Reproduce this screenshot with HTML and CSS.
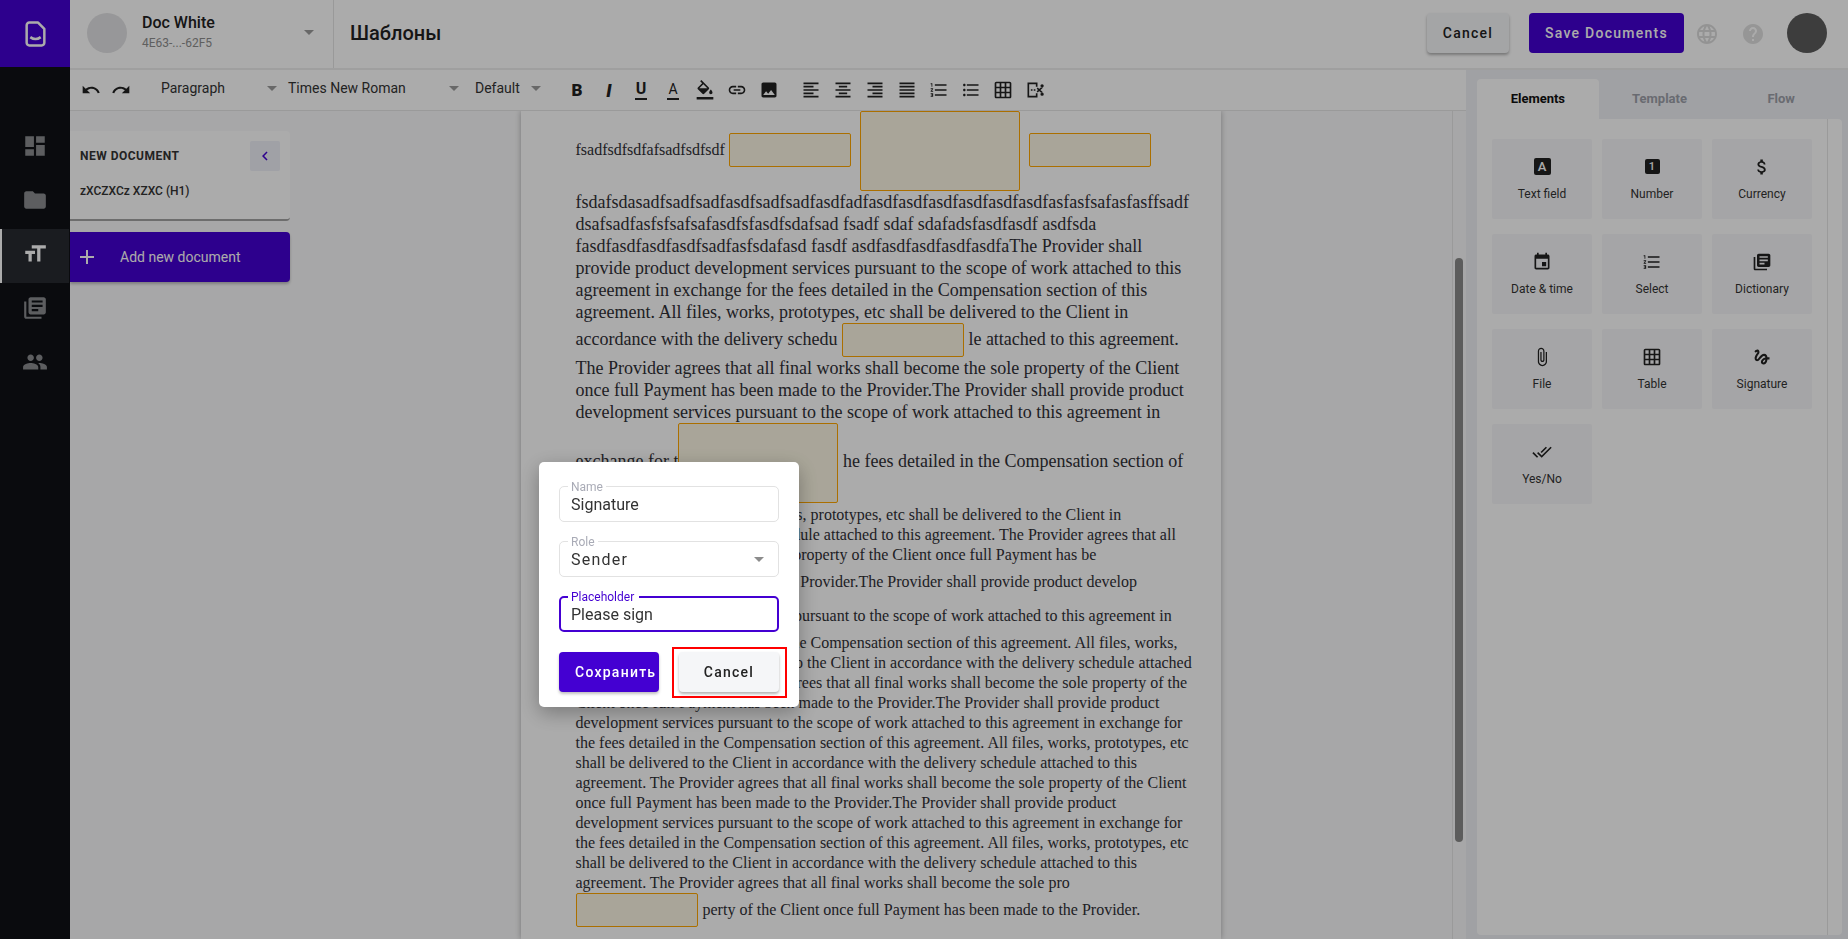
FILE: index.html
```html
<!DOCTYPE html>
<html lang="en">
<head>
    <meta charset="UTF-8">
    <title>Templates</title>
    <link rel="stylesheet" href="styles.css">
</head>
<body>
<svg class="sprite" xmlns="http://www.w3.org/2000/svg">
    <symbol id="i-dashboard" viewBox="0 0 24 24"><path d="M3 13h8V3H3v10zm0 8h8v-6H3v6zm10 0h8V11h-8v10zm0-18v6h8V3h-8z"/></symbol>
    <symbol id="i-folder" viewBox="0 0 24 24"><path d="M10 4H4c-1.1 0-1.99.9-1.99 2L2 18c0 1.1.9 2 2 2h16c1.1 0 2-.9 2-2V8c0-1.1-.9-2-2-2h-8l-2-2z"/></symbol>
    <symbol id="i-size" viewBox="0 0 24 24"><path d="M9 4v3h5v12h3V7h5V4H9zm-6 8h3v7h3v-7h3V9H3v3z"/></symbol>
    <symbol id="i-library" viewBox="0 0 24 24"><path d="M4 6H2v14c0 1.1.9 2 2 2h14v-2H4V6zm16-4H8c-1.1 0-2 .9-2 2v12c0 1.1.9 2 2 2h12c1.1 0 2-.9 2-2V4c0-1.1-.9-2-2-2zm-1 9H9V9h10v2zm-4 4H9v-2h6v2zm4-8H9V5h10v2z"/></symbol>
    <symbol id="i-people" viewBox="0 0 24 24"><path d="M16 11c1.66 0 2.99-1.34 2.99-3S17.66 5 16 5c-1.66 0-3 1.34-3 3s1.34 3 3 3zm-8 0c1.66 0 2.99-1.34 2.99-3S9.66 5 8 5C6.34 5 5 6.34 5 8s1.34 3 3 3zm0 2c-2.33 0-7 1.17-7 3.5V19h14v-2.5c0-2.33-4.67-3.5-7-3.5zm8 0c-.29 0-.62.02-.97.05 1.16.84 1.97 1.97 1.97 3.45V19h6v-2.5c0-2.33-4.67-3.5-7-3.5z"/></symbol>
    <symbol id="i-undo" viewBox="0 0 24 24"><path d="M12.5 8c-2.65 0-5.05.99-6.9 2.6L2 7v9h9l-3.62-3.62c1.39-1.16 3.16-1.88 5.12-1.88 3.54 0 6.55 2.31 7.6 5.5l2.37-.78C21.08 11.03 17.15 8 12.5 8z"/></symbol>
    <symbol id="i-redo" viewBox="0 0 24 24"><path d="M18.4 10.6C16.55 8.99 14.15 8 11.5 8c-4.65 0-8.58 3.03-9.96 7.22L3.9 16c1.05-3.19 4.05-5.5 7.6-5.5 1.95 0 3.73.72 5.12 1.88L13 16h9V7l-3.6 3.6z"/></symbol>
    <symbol id="i-fill" viewBox="0 0 24 24"><path d="M16.56 8.94L7.62 0 6.21 1.41l2.38 2.38-5.15 5.15c-.59.59-.59 1.54 0 2.12l5.5 5.5c.29.29.68.44 1.06.44s.77-.15 1.06-.44l5.5-5.5c.59-.58.59-1.53 0-2.12zM5.21 10L10 5.21 14.79 10H5.21zM19 11.5s-2 2.17-2 3.5c0 1.1.9 2 2 2s2-.9 2-2c0-1.33-2-3.5-2-3.5zM2 20.500h20v3H2z"/></symbol>
    <symbol id="i-link" viewBox="0 0 24 24"><path d="M3.9 12c0-1.71 1.39-3.1 3.1-3.1h4V7H7c-2.76 0-5 2.24-5 5s2.24 5 5 5h4v-1.9H7c-1.71 0-3.1-1.39-3.1-3.1zM8 13h8v-2H8v2zm9-6h-4v1.9h4c1.71 0 3.1 1.39 3.1 3.1s-1.39 3.1-3.1 3.1h-4V17h4c2.76 0 5-2.24 5-5s-2.24-5-5-5z"/></symbol>
    <symbol id="i-image" viewBox="0 0 24 24"><path d="M21 19V5c0-1.1-.9-2-2-2H5c-1.1 0-2 .9-2 2v14c0 1.1.9 2 2 2h14c1.1 0 2-.9 2-2zM8.5 13.5l2.5 3.01L14.5 12l4.5 6H5l3.5-4.5z"/></symbol>
    <symbol id="i-left" viewBox="0 0 24 24"><path d="M15 15H3v2h12v-2zm0-8H3v2h12V7zM3 13h18v-2H3v2zm0 8h18v-2H3v2zM3 3v2h18V3H3z"/></symbol>
    <symbol id="i-center" viewBox="0 0 24 24"><path d="M7 15v2h10v-2H7zm-4 6h18v-2H3v2zm0-8h18v-2H3v2zm4-6v2h10V7H7zM3 3v2h18V3H3z"/></symbol>
    <symbol id="i-right" viewBox="0 0 24 24"><path d="M3 21h18v-2H3v2zm6-4h12v-2H9v2zm-6-4h18v-2H3v2zm6-4h12V7H9v2zM3 3v2h18V3H3z"/></symbol>
    <symbol id="i-justify" viewBox="0 0 24 24"><path d="M3 21h18v-2H3v2zm0-4h18v-2H3v2zm0-4h18v-2H3v2zm0-4h18V7H3v2zm0-6v2h18V3H3z"/></symbol>
    <symbol id="i-ol" viewBox="0 0 24 24"><path d="M2 17h2v.5H3v1h1v.5H2v1h3v-4H2v1zm1-9h1V4H2v1h1v3zm-1 3h1.8L2 13.1v.9h3v-1H3.2L5 10.9V10H2v1zm5-6v2h14V5H7zm0 14h14v-2H7v2zm0-6h14v-2H7v2z"/></symbol>
    <symbol id="i-ul" viewBox="0 0 24 24"><path d="M4 10.5c-.83 0-1.5.67-1.5 1.5s.67 1.5 1.5 1.5 1.5-.67 1.5-1.5-.67-1.5-1.5-1.5zm0-6c-.83 0-1.5.67-1.5 1.5S3.17 7.5 4 7.5 5.5 6.83 5.5 6 4.83 4.5 4 4.5zm0 12c-.83 0-1.5.68-1.5 1.5s.68 1.5 1.5 1.5 1.5-.68 1.5-1.5-.67-1.5-1.5-1.5zM7 19h14v-2H7v2zm0-6h14v-2H7v2zm0-8v2h14V5H7z"/></symbol>
    <symbol id="i-table" viewBox="0 0 24 24"><path d="M20 2H4c-1.1 0-2 .9-2 2v16c0 1.1.9 2 2 2h16c1.1 0 2-.9 2-2V4c0-1.1-.9-2-2-2zM8 20H4v-4h4v4zm0-6H4v-4h4v4zm0-6H4V4h4v4zm6 12h-4v-4h4v4zm0-6h-4v-4h4v4zm0-6h-4V4h4v4zm6 12h-4v-4h4v4zm0-6h-4v-4h4v4zm0-6h-4V4h4v4z"/></symbol>
    <symbol id="i-export" viewBox="0 0 24 24"><path d="M3 3h12v5h-2V5H5v14h8v-3h2v5H3zM7 11h2v2H7zM10.500 11h2v2h-2zM14 10.500l1.200-1.500 6 5.500-1.200 1.500zM14 13.500l6-5.500 1.200 1.500-6 5.500zM18.500 7a2 2 0 1 0 4 0 2 2 0 1 0-4 0zM18.500 17a2 2 0 1 0 4 0 2 2 0 1 0-4 0z"/></symbol>
    <symbol id="i-globe" viewBox="0 0 24 24"><path d="M11.990 2C6.470 2 2 6.480 2 12s4.470 10 9.990 10C17.520 22 22 17.520 22 12S17.520 2 11.990 2zm6.930 6h-2.950c-.32-1.250-.78-2.450-1.380-3.560 1.840.63 3.370 1.910 4.330 3.560zM12 4.040c.83 1.200 1.480 2.530 1.910 3.960h-3.820c.43-1.430 1.080-2.760 1.910-3.960zM4.260 14C4.100 13.360 4 12.690 4 12s.1-1.360.26-2h3.380c-.08.66-.14 1.320-.14 2 0 .68.06 1.340.14 2H4.260zm.82 2h2.950c.32 1.250.78 2.450 1.380 3.560-1.840-.63-3.370-1.900-4.330-3.560zm2.950-8H5.080c.96-1.660 2.490-2.930 4.330-3.560C8.810 5.550 8.350 6.750 8.030 8zM12 19.960c-.83-1.200-1.480-2.530-1.910-3.960h3.820c-.43 1.430-1.080 2.760-1.910 3.960zM14.340 14H9.660c-.09-.66-.16-1.320-.16-2 0-.68.07-1.350.16-2h4.680c.09.65.16 1.320.16 2 0 .68-.07 1.340-.16 2zm.25 5.560c.6-1.110 1.060-2.310 1.380-3.560h2.950c-.96 1.650-2.490 2.930-4.330 3.560zM16.360 14c.08-.66.14-1.320.14-2 0-.68-.06-1.340-.14-2h3.380c.16.64.26 1.310.26 2s-.1 1.360-.26 2h-3.380z"/></symbol>
    <symbol id="i-help" viewBox="0 0 24 24"><path d="M12 2C6.480 2 2 6.480 2 12s4.480 10 10 10 10-4.480 10-10S17.520 2 12 2zm1 17h-2v-2h2v2zm2.070-7.750l-.9.92C13.450 12.900 13 13.500 13 15h-2v-.5c0-1.100.45-2.100 1.170-2.830l1.240-1.260c.37-.36.59-.86.59-1.410 0-1.100-.9-2-2-2s-2 .9-2 2H8c0-2.210 1.790-4 4-4s4 1.790 4 4c0 .88-.36 1.680-.93 2.250z"/></symbol>
    <symbol id="i-chevron" viewBox="0 0 24 24"><path d="M15.410 7.410L14 6l-6 6 6 6 1.410-1.410L10.830 12z"/></symbol>
    <symbol id="i-add" viewBox="0 0 24 24"><path d="M19 13h-6v6h-2v-6H5v-2h6V5h2v6h6v2z"/></symbol>
    <symbol id="i-money" viewBox="0 0 24 24"><path d="M11.800 10.900c-2.270-.59-3-1.200-3-2.150 0-1.090 1.010-1.850 2.700-1.850 1.780 0 2.440.85 2.500 2.100h2.210c-.07-1.720-1.120-3.300-3.210-3.810V3h-3v2.160c-1.940.42-3.500 1.680-3.500 3.610 0 2.310 1.910 3.460 4.700 4.130 2.500.6 3 1.480 3 2.410 0 .69-.49 1.790-2.700 1.790-2.060 0-2.870-.92-2.980-2.100h-2.200c.12 2.190 1.760 3.420 3.680 3.830V21h3v-2.150c1.950-.37 3.500-1.500 3.500-3.550 0-2.840-2.430-3.810-4.700-4.400z"/></symbol>
    <symbol id="i-event" viewBox="0 0 24 24"><path d="M17 12h-5v5h5v-5zM16 1v2H8V1H6v2H5c-1.110 0-1.990.9-1.990 2L3 19c0 1.100.89 2 2 2h14c1.100 0 2-.9 2-2V5c0-1.100-.9-2-2-2h-1V1h-2zm3 18H5V8h14v11z"/></symbol>
    <symbol id="i-attach" viewBox="0 0 24 24"><path d="M16.500 6v11.500c0 2.210-1.790 4-4 4s-4-1.790-4-4V5c0-1.380 1.120-2.500 2.500-2.500s2.500 1.120 2.500 2.500v10.500c0 .55-.45 1-1 1s-1-.45-1-1V6H10v9.500c0 1.380 1.120 2.500 2.500 2.500s2.500-1.120 2.500-2.500V5c0-2.210-1.790-4-4-4S7 2.790 7 5v12.500c0 3.040 2.460 5.500 5.500 5.500s5.500-2.460 5.500-5.500V6h-1.500z"/></symbol>
    <symbol id="i-gesture" viewBox="0 0 24 24"><path d="M4.590 6.890c.7-.71 1.400-1.350 1.710-1.220.5.2 0 1.030-.3 1.520-.25.42-2.860 3.890-2.860 6.310 0 1.280.48 2.340 1.340 2.980.75.56 1.740.73 2.640.46 1.070-.31 1.950-1.400 3.060-2.770 1.210-1.490 2.830-3.440 4.080-3.440 1.630 0 1.650 1.010 1.760 1.790-3.780.64-5.380 3.670-5.380 5.370 0 1.700 1.440 3.090 3.210 3.090 1.630 0 4.290-1.330 4.690-6.100H21v-2.500h-2.470c-.15-1.650-1.090-4.200-4.030-4.200-2.250 0-4.180 1.910-4.940 2.840-.58.73-2.060 2.480-2.290 2.720-.25.3-.68.84-1.110.84-.45 0-.72-.83-.36-1.920.35-1.090 1.400-2.860 1.850-3.520.78-1.140 1.300-1.920 1.300-3.280C8.950 3.690 7.310 3 6.440 3 5.120 3 3.970 4 3.720 4.250c-.36.36-.66.66-.88.93l1.750 1.710zm9.290 11.660c-.31 0-.74-.26-.74-.72 0-.6.73-2.200 2.870-2.760-.3 2.690-1.430 3.480-2.130 3.480z"/></symbol>
    <symbol id="i-done" viewBox="0 0 24 24"><path d="M18 7l-1.410-1.410-6.340 6.340 1.410 1.410L18 7zm4.240-1.410L11.660 16.170 7.480 12l-1.410 1.410L11.660 19l12-12-1.420-1.410zM.41 13.410L6 19l1.410-1.410L1.830 12 .41 13.410z"/></symbol>
</svg>

<div class="app">
    <aside class="rail">
        <div class="rail-logo">
            <svg class="logo" viewBox="0 0 20 25"><path d="M4 1.500h8.500L18.500 7.500V21a2.500 2.500 0 0 1-2.500 2.500H4A2.500 2.500 0 0 1 1.500 21V4A2.500 2.500 0 0 1 4 1.500z"/><path d="M5 15.500c3 2.200 7 2.200 10 0"/></svg>
        </div>
        <nav class="rail-nav">
            <a class="rail-item"><svg class="icon"><use href="#i-dashboard"/></svg></a>
            <a class="rail-item"><svg class="icon"><use href="#i-folder"/></svg></a>
            <a class="rail-item active"><svg class="icon"><use href="#i-size"/></svg></a>
            <a class="rail-item"><svg class="icon"><use href="#i-library"/></svg></a>
            <a class="rail-item"><svg class="icon"><use href="#i-people"/></svg></a>
        </nav>
    </aside>

    <div class="content">
        <header class="topbar">
            <div class="account">
                <div class="account-photo"></div>
                <div class="account-text">
                    <div class="account-name">Doc White</div>
                    <div class="account-id">4E63-...-62F5</div>
                </div>
                <span class="caret"></span>
            </div>
            <h1 class="page-title">Шаблоны</h1>
            <button class="btn btn-light topbar-cancel">Cancel</button>
            <button class="btn btn-primary topbar-save">Save Documents</button>
            <svg class="icon topbar-icon globe"><use href="#i-globe"/></svg>
            <svg class="icon topbar-icon help"><use href="#i-help"/></svg>
            <div class="user-photo"></div>
        </header>

        <div class="body-row">
            <div class="center">
                <div class="toolbar">
                    <span class="tool undo"><svg class="icon"><use href="#i-undo"/></svg></span>
                    <span class="tool undo"><svg class="icon"><use href="#i-redo"/></svg></span>
                    <span class="select select-block">Paragraph<span class="caret"></span></span>
                    <span class="select select-font">Times New Roman<span class="caret"></span></span>
                    <span class="select select-size">Default<span class="caret"></span></span>
                    <span class="tool letter letter-b">B</span>
                    <span class="tool letter letter-i">I</span>
                    <span class="tool letter letter-u">U</span>
                    <span class="tool letter letter-a">A</span>
                    <span class="tool"><svg class="icon"><use href="#i-fill"/></svg></span>
                    <span class="tool"><svg class="icon"><use href="#i-link"/></svg></span>
                    <span class="tool"><svg class="icon"><use href="#i-image"/></svg></span>
                    <span class="tool-gap"></span>
                    <span class="tool"><svg class="icon"><use href="#i-left"/></svg></span>
                    <span class="tool"><svg class="icon"><use href="#i-center"/></svg></span>
                    <span class="tool"><svg class="icon"><use href="#i-right"/></svg></span>
                    <span class="tool"><svg class="icon"><use href="#i-justify"/></svg></span>
                    <span class="tool"><svg class="icon"><use href="#i-ol"/></svg></span>
                    <span class="tool"><svg class="icon"><use href="#i-ul"/></svg></span>
                    <span class="tool"><svg class="icon"><use href="#i-table"/></svg></span>
                    <span class="tool"><svg class="icon"><use href="#i-export"/></svg></span>
                </div>

                <div class="workspace">
                    <div class="docs">
                        <div class="docs-card">
                            <div class="docs-head">
                                <span class="docs-title">NEW DOCUMENT</span>
                                <span class="docs-toggle"><svg class="icon"><use href="#i-chevron"/></svg></span>
                            </div>
                            <div class="docs-item">zXCZXCz XZXC (H1)</div>
                        </div>
                        <button class="add-doc"><svg class="icon"><use href="#i-add"/></svg>Add new document</button>
                    </div>

                    <div class="editor">
                        <article class="page">
                            <p class="line-big">fsadfsdfsdfafsadfsdfsdf <span class="field field-first"></span> <span class="field field-big"></span> <span class="field field-last"></span></p>
                            <p class="para-big">fsdafsdasadfsadfsadfasdfsadfsadfasdfadfasdfasdfasdfasdfasdfasdfasfasfsafasfasffsadf<br>
                            dsafsadfasfsfsafsafasdfsfasdfsdafsad fsadf sdaf sdafadsfasdfasdf asdfsda<br>
                            fasdfasdfasdfasdfsadfasfsdafasd fasdf asdfasdfasdfasdfasdfaThe Provider shall<br>
                            provide product development services pursuant to the scope of work attached to this<br>
                            agreement in exchange for the fees detailed in the Compensation section of this<br>
                            agreement. All files, works, prototypes, etc shall be delivered to the Client in<br>
                            accordance with the delivery schedu <span class="field"></span> le attached to this agreement.<br>
                            The Provider agrees that all final works shall become the sole property of the Client<br>
                            once full Payment has been made to the Provider.The Provider shall provide product<br>
                            development services pursuant to the scope of work attached to this agreement in<br>
                            exchange for t<span class="field field-big"></span> he fees detailed in the Compensation section of</p>
                            <p class="para-small">and this agreement. All files, works, prototypes, etc shall be delivered to the Client in<br>
                            accordance with the delivery schedule attached to this agreement. The Provider agrees that all<br>
                            final works shall become the sole property of the Client once full Payment has be<br>
                            <span class="field"></span> en made to the Provider.The Provider shall provide product develop<br>
                            <span class="field"></span> ment services pursuant to the scope of work attached to this agreement in<br>
                            exchange for the fees detailed in the Compensation section of this agreement. All files, works,<br>
                            prototypes, etc shall be delivered to the Client in accordance with the delivery schedule attached<br>
                            to this agreement. The Provider agrees that all final works shall become the sole property of the<br>
                            Client once full Payment has been made to the Provider.The Provider shall provide product<br>
                            development services pursuant to the scope of work attached to this agreement in exchange for<br>
                            the fees detailed in the Compensation section of this agreement. All files, works, prototypes, etc<br>
                            shall be delivered to the Client in accordance with the delivery schedule attached to this<br>
                            agreement. The Provider agrees that all final works shall become the sole property of the Client<br>
                            once full Payment has been made to the Provider.The Provider shall provide product<br>
                            development services pursuant to the scope of work attached to this agreement in exchange for<br>
                            the fees detailed in the Compensation section of this agreement. All files, works, prototypes, etc<br>
                            shall be delivered to the Client in accordance with the delivery schedule attached to this<br>
                            agreement. The Provider agrees that all final works shall become the sole pro<br>
                            <span class="field"></span> perty of the Client once full Payment has been made to the Provider.</p>
                        </article>
                        <div class="scroll-track"><div class="scroll-thumb"></div></div>
                    </div>
                </div>
            </div>

            <aside class="side">
                <div class="tabs">
                    <span class="tab active">Elements</span>
                    <span class="tab">Template</span>
                    <span class="tab">Flow</span>
                </div>
                <div class="side-body">
                    <div class="elements">
                        <div class="element"><span class="box-icon">A</span>Text field</div>
                        <div class="element"><span class="box-icon box-icon-num">1</span>Number</div>
                        <div class="element"><svg class="icon"><use href="#i-money"/></svg>Currency</div>
                        <div class="element"><svg class="icon"><use href="#i-event"/></svg>Date &amp; time</div>
                        <div class="element"><svg class="icon"><use href="#i-ol"/></svg>Select</div>
                        <div class="element"><svg class="icon"><use href="#i-library"/></svg>Dictionary</div>
                        <div class="element"><svg class="icon"><use href="#i-attach"/></svg>File</div>
                        <div class="element"><svg class="icon"><use href="#i-table"/></svg>Table</div>
                        <div class="element"><svg class="icon"><use href="#i-gesture"/></svg>Signature</div>
                        <div class="element"><svg class="icon"><use href="#i-done"/></svg>Yes/No</div>
                    </div>
                    <div class="side-track"></div>
                </div>
            </aside>
        </div>
    </div>
</div>

<div class="backdrop"></div>
<div class="dialog">
    <div class="input"><label>Name</label>Signature</div>
    <div class="input input-select"><label>Role</label>Sender<span class="caret"></span></div>
    <div class="input focused"><label>Placeholder</label>Please sign</div>
    <div class="dialog-actions">
        <button class="btn btn-dialog-save">Сохранить</button>
        <button class="btn btn-light btn-dialog-cancel">Cancel</button>
    </div>
</div>
</body>
</html>
```

FILE: styles.css
```css
* {
    box-sizing: border-box;
}
html, body {
    height: 100%;
}
body {
    margin: 0;
    overflow: hidden;
    font-family: Roboto, sans-serif;
    color: #333;
    background: #fff;
}
p {
    margin: 0;
}
button {
    font-family: inherit;
    border: 0;
    cursor: pointer;
}
.sprite {
    display: none;
}
.icon {
    width: 20px;
    height: 20px;
    fill: currentColor;
    flex: none;
    display: block;
}

/* app frame */
.app {
    display: flex;
    height: 100vh;
}
.rail {
    width: 70px;
    flex: none;
    background: #0f1116;
    color: #8b8d90;
}
.rail-logo {
    height: 67px;
    background: #4400d2;
    display: flex;
    align-items: center;
    justify-content: center;
}
.logo {
    width: 21px;
    height: 26px;
    fill: none;
    stroke: #fff;
    stroke-width: 2.4;
    stroke-linejoin: round;
}
.rail-nav {
    padding-top: 52px;
}
.rail-item {
    position: relative;
    height: 54px;
    display: flex;
    align-items: center;
    justify-content: center;
}
.rail-item .icon {
    position: relative;
    width: 26px;
    height: 26px;
}
.rail-item.active {
    color: #fff;
}
/* the band sits 2px lower than the icon */
.rail-item.active::before {
    content: "";
    position: absolute;
    left: 0;
    right: 1px;
    top: 2px;
    bottom: -2px;
    background: #272a30;
    border-left: 2px solid #fff;
}
.content {
    flex: 1;
    min-width: 0;
    display: flex;
    flex-direction: column;
}

/* top bar */
.topbar {
    height: 70px;
    flex: none;
    display: flex;
    align-items: flex-start;
    border-bottom: 2px solid #ededed;
}
.account {
    width: 264px;
    height: 68px;
    padding: 13px 19px 0 17px;
    border-right: 1px solid #e4e4e4;
    display: flex;
}
.account-photo {
    width: 40px;
    height: 40px;
    border-radius: 50%;
    background: #e2e2e4;
}
.account-text {
    margin-left: 15px;
    flex: 1;
}
.account-name {
    font-size: 16px;
    font-weight: 500;
    line-height: 19px;
    color: #222;
}
.account-id {
    font-size: 12px;
    line-height: 14px;
    margin-top: 4px;
    color: #8e8e8e;
}
.caret {
    width: 0;
    height: 0;
    border: 5px solid transparent;
    border-top-color: #9c9c9c;
    border-bottom: 0;
    flex: none;
}
.account .caret {
    margin-top: 17px;
}
.page-title {
    margin: 0 0 0 16px;
    font-size: 20px;
    font-weight: 500;
    line-height: 66px;
    color: #222;
    flex: 1;
}
.btn {
    height: 40px;
    border-radius: 4px;
    font-size: 14px;
    font-weight: 500;
    letter-spacing: 1.25px;
}
.btn-light {
    background: #f5f6f8;
    color: #222;
    box-shadow: 0 2px 3px rgba(0, 0, 0, 0.3);
}
.btn-primary {
    background: #4400d2;
    color: #fff;
}
.topbar-cancel {
    width: 82px;
    margin-top: 13px;
}
.topbar-save {
    width: 155px;
    margin: 13px 0 0 20px;
}
.topbar-icon {
    width: 24px;
    height: 24px;
    margin-top: 22px;
    color: #dcdcdc;
}
.globe {
    margin-left: 11px;
}
.help {
    margin-left: 22px;
    color: #e0e0e0;
}
.user-photo {
    width: 40px;
    height: 40px;
    border-radius: 50%;
    background: #5c5c5c;
    margin: 13px 21px 0 22px;
}

/* toolbar */
.body-row {
    flex: 1;
    min-height: 0;
    display: flex;
}
.center {
    width: 1396px;
    flex: none;
    display: flex;
    flex-direction: column;
}
.toolbar {
    height: 41px;
    flex: none;
    padding-left: 6px;
    display: flex;
    align-items: center;
    border-bottom: 1px solid #e6e6e6;
    font-size: 14px;
    color: #333;
}
.tool {
    width: 32px;
    height: 40px;
    display: flex;
    align-items: center;
    justify-content: center;
    color: #222;
}
.tool.undo {
    width: 30px;
}
.tool-gap {
    width: 10px;
}
.letter {
    font-weight: 900;
    font-size: 16px;
}
.letter-b {
    font-size: 17px;
}
.letter-i {
    font-style: italic;
    font-size: 18px;
}
.letter-u {
    font-weight: 700;
    font-size: 16px;
    line-height: 14px;
    padding-top: 2px;
}
.letter-u, .letter-a {
    flex-direction: column;
}
.letter-u::after, .letter-a::after {
    content: "";
    width: 12px;
    height: 2px;
    margin-top: 2px;
    background: #222;
}
.letter-a {
    font-weight: 400;
    font-size: 14px;
    line-height: 13px;
    padding-top: 2px;
}
.select {
    display: flex;
    align-items: center;
    justify-content: space-between;
    height: 40px;
    padding-bottom: 4px;
}
.select .caret {
    margin-top: 1px;
}
.select-block {
    width: 127px;
    margin-left: 25px;
    padding-right: 11px;
}
.select-font {
    width: 187px;
    padding-right: 16px;
}
.select-size {
    width: 86px;
    padding-right: 20px;
}

/* documents + page */
.workspace {
    flex: 1;
    min-height: 0;
    display: flex;
    background: #fafafb;
    overflow: hidden;
}
.docs {
    width: 220px;
    flex: none;
    padding-top: 20px;
}
.docs-card {
    height: 90px;
    background: #fff;
    padding: 10px 10px 0;
    border-radius: 0 4px 4px 0;
    border-bottom: 2px solid #a3a3a3;
}
.docs-head {
    display: flex;
    justify-content: space-between;
    align-items: center;
}
.docs-title {
    font-size: 12px;
    font-weight: 700;
    letter-spacing: 0.5px;
    color: #333;
}
.docs-toggle {
    width: 30px;
    height: 30px;
    background: #eff0f8;
    border-radius: 2px;
    display: flex;
    align-items: center;
    justify-content: center;
    color: #4400d2;
}
.docs-toggle .icon {
    width: 18px;
    height: 18px;
}
.docs-item {
    font-size: 12px;
    font-weight: 500;
    margin-top: 13px;
    color: #333;
}
.add-doc {
    width: 220px;
    height: 50px;
    margin-top: 11px;
    padding: 0 0 0 5px;
    display: flex;
    align-items: center;
    background: #4400d2;
    color: #fff;
    font-size: 14px;
    border-radius: 0 4px 4px 0;
    box-shadow: 0 2px 3px rgba(0, 0, 0, 0.25);
}
.add-doc .icon {
    width: 24px;
    height: 24px;
    margin-right: 21px;
}
.editor {
    flex: 1;
    display: flex;
    justify-content: space-between;
    min-width: 0;
}
.page {
    width: 700px;
    margin-left: 231px;
    padding: 0 0 0 54.5px;
    background: #fff;
    box-shadow: 0 0 6px rgba(0, 0, 0, 0.3);
    font-family: "Liberation Serif", "Times New Roman", serif;
    color: #303036;
    white-space: nowrap;
}
.line-big {
    font-size: 16px;
}
.line-big .field {
    vertical-align: middle;
    margin: 0 2px 2px 1px;
}
.line-big .field-first {
    margin-left: 0;
    margin-right: 3px;
}
.line-big .field-big {
    margin: 0 2px;
}
.line-big .field-last {
    margin-left: 3px;
}
.para-big {
    font-size: 18px;
    line-height: 22px;
}
.para-small {
    margin-top: 2px;
    font-size: 16px;
    line-height: 20px;
}
.para-small .field {
    margin-right: 1px;
}
.field {
    display: inline-block;
    width: 122px;
    height: 34px;
    vertical-align: -12px;
    background: #fcf7e4;
    border: 1px solid #ffa600;
    border-radius: 2px;
}
.field-big {
    width: 160px;
    height: 80px;
    vertical-align: middle;
}
.scroll-track {
    width: 14px;
    flex: none;
    border-left: 1px solid #e6e6e6;
    padding: 147px 2px 0;
}
.scroll-thumb {
    width: 8px;
    height: 584px;
    border-radius: 4px;
    background: #8a8a8a;
}

/* right panel */
.side {
    flex: 1;
    min-width: 0;
    padding: 9px 6px 4px 11px;
    background: #eff0f5;
    display: flex;
    flex-direction: column;
}
.tabs {
    display: flex;
    height: 40px;
    flex: none;
}
.tab {
    width: 122px;
    padding-bottom: 2px;
    display: flex;
    align-items: center;
    justify-content: center;
    font-size: 13px;
    font-weight: 700;
    color: #9da0a9;
    border-radius: 4px 4px 0 0;
}
.tab.active {
    background: #fff;
    color: #111;
}
.side-body {
    flex: 1;
    display: flex;
    justify-content: space-between;
    background: #fff;
    border-radius: 0 4px 4px 4px;
}
.elements {
    padding: 20px 0 0 15px;
    display: grid;
    grid-template-columns: repeat(3, 100px);
    grid-auto-rows: 80px;
    column-gap: 10px;
    row-gap: 15px;
    align-content: start;
}
.element {
    background: #f7f7f9;
    border-radius: 2px;
    padding-top: 16px;
    display: flex;
    flex-direction: column;
    align-items: center;
    font-size: 12px;
    line-height: 14px;
    color: #333;
}
.element .icon {
    width: 24px;
    height: 24px;
    margin-bottom: 8px;
    color: #222;
    padding: 2px;
}
.box-icon {
    width: 17px;
    height: 17px;
    margin: 3px 0 12px;
    border-radius: 2px;
    background: #222;
    color: #fff;
    font-size: 13px;
    font-weight: 500;
    line-height: 17px;
    text-align: center;
}
.box-icon-num {
    width: 15px;
    height: 15px;
    margin: 4px 0 13px;
    font-size: 11px;
    line-height: 15px;
}
.side-track {
    width: 15px;
    border-left: 1px solid #e6e6e6;
}

/* dialog over everything */
.backdrop {
    position: fixed;
    inset: 0;
    background: rgba(0, 0, 0, 0.33);
}
.dialog {
    position: fixed;
    left: 539px;
    top: 462px;
    width: 260px;
    height: 245px;
    padding: 24px 20px 0;
    background: #fff;
    border-radius: 5px;
    box-shadow: 0 6px 20px rgba(0, 0, 0, 0.3);
    display: flex;
    flex-direction: column;
    gap: 19px;
}
.input {
    position: relative;
    height: 36px;
    padding: 8px 0 0 11px;
    border: 1px solid #e2e2e2;
    border-radius: 5px;
    font-size: 16px;
    line-height: 20px;
    color: #333;
}
.input label {
    position: absolute;
    left: 8px;
    top: -5px;
    padding: 0 3px;
    background: #fff;
    font-size: 12px;
    line-height: 11px;
    color: #a9abb6;
}
.input-select {
    letter-spacing: 1.25px;
    display: flex;
    justify-content: space-between;
    padding-right: 14px;
}
.input-select label {
    letter-spacing: 0;
}
.input-select .caret {
    margin-top: 7px;
    border-top-color: #8c8c8c;
}
.input.focused {
    border: 2px solid #4400d2;
    padding: 7px 0 0 10px;
}
.input.focused label {
    left: 7px;
    top: -6px;
    color: #4400d2;
    padding-right: 5px;
}
.dialog-actions {
    display: flex;
    justify-content: space-between;
    margin-top: 1px;
}
.btn-dialog-save {
    width: 100px;
    padding: 0 0 0 16px;
    text-align: left;
    white-space: nowrap;
    background: #4400d2;
    color: #fff;
    box-shadow: 0 2px 3px rgba(0, 0, 0, 0.25);
}
.btn-dialog-cancel {
    position: relative;
    width: 100px;
}
/* red marker drawn around the button */
.btn-dialog-cancel::after {
    content: "";
    position: absolute;
    left: -7px;
    right: -8px;
    top: -5px;
    bottom: -6px;
    border: 2px solid #f00;
}
```
